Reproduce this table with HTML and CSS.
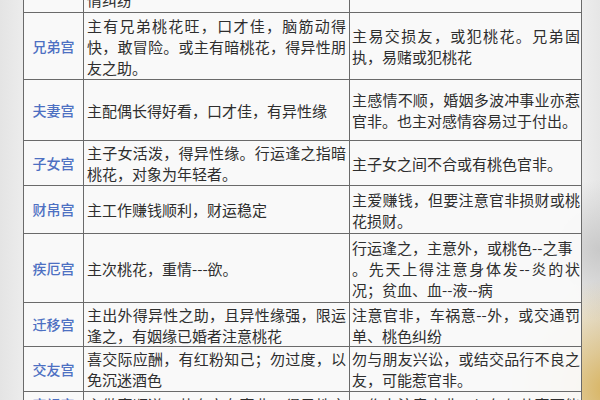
FILE: index.html
```html
<!DOCTYPE html>
<html lang="zh">
<head>
<meta charset="utf-8">
<link rel="stylesheet" href="styles.css">
</head>
<body>
<div class="page">
<table class="grid">
<colgroup><col class="c1"><col class="c2"><col class="c3"></colgroup>
<tr class="r0"><td class="name"></td><td class="txt bottom">情纠纷</td><td class="txt rt"></td></tr>
<tr class="r1"><td class="name">兄弟宫</td><td class="txt">主有兄弟桃花旺，口才佳，脑筋动得快，敢冒险。或主有暗桃花，得异性朋友之助。</td><td class="txt rt">主易交损友，或犯桃花。兄弟固执，易赌或犯桃花</td></tr>
<tr class="r2"><td class="name">夫妻宫</td><td class="txt">主配偶长得好看，口才佳，有异性缘</td><td class="txt rt">主感情不顺，婚姻多波冲事业亦惹官非。也主对感情容易过于付出。</td></tr>
<tr class="r3"><td class="name">子女宫</td><td class="txt">主子女活泼，得异性缘。行运逢之指暗桃花，对象为年轻者。</td><td class="txt rt">主子女之间不合或有桃色官非。</td></tr>
<tr class="r4"><td class="name">财帛宫</td><td class="txt">主工作赚钱顺利，财运稳定</td><td class="txt rt">主爱赚钱，但要注意官非损财或桃花损财。</td></tr>
<tr class="r5"><td class="name">疾厄宫</td><td class="txt">主次桃花，重情---欲。</td><td class="txt rt">行运逢之，主意外，或桃色--之事<br>。先天上得注意身体发--炎的状况；贫血、血--液--病</td></tr>
<tr class="r6"><td class="name">迁移宫</td><td class="txt">主出外得异性之助，且异性缘强，限运逢之，有姻缘已婚者注意桃花</td><td class="txt rt">注意官非，车祸意--外，或交通罚单、桃色纠纷</td></tr>
<tr class="r7"><td class="name">交友宫</td><td class="txt">喜交际应酬，有红粉知己；勿过度，以免沉迷酒色</td><td class="txt rt">勿与朋友兴讼，或结交品行不良之友，可能惹官非。</td></tr>
<tr class="r8"><td class="name top">官禄宫</td><td class="txt top">主做事顺遂，若身旁有事业，得异性之助</td><td class="txt rt top">工作上注意官非，切勿与共事可能被</td></tr>
</table>
</div>
</body>
</html>
```

FILE: styles.css
```css
html, body {
  margin: 0;
  padding: 0;
}
body {
  width: 600px;
  height: 400px;
  overflow: hidden;
  background:
    radial-gradient(circle at 610px 390px, #d8b35e 0, rgba(216,179,94,0.6) 40px, rgba(216,179,94,0) 110px),
    radial-gradient(circle at 600px 250px, #c9c9c9 0, rgba(200,200,200,0) 70px),
    linear-gradient(to right, #e4e4e4 0, #ececec 23px, #eeeeee 580px, #e6e6e6 600px);
  font-family: "Noto Sans CJK SC", "Noto Sans", sans-serif;
}
.page {
  padding-left: 23px;
}
.grid {
  margin-top: -21px;
  border-collapse: collapse;
  table-layout: fixed;
  width: 558px;
  background: rgba(250, 250, 250, 0.94);
}
.c1 { width: 60px; }
.c2 { width: 266px; }
.c3 { width: 232px; }
.grid td {
  border: 1px solid #6a6a6a;
  vertical-align: middle;
  padding: 0 3px;
  font-size: 15px;
  line-height: 21px;
  color: #2e2e2e;
}
.grid td.name {
  text-align: center;
  color: #4d70c2;
  font-size: 14px;
  font-weight: 500;
  padding: 0;
}
.grid td.txt {
  text-align: justify;
}
.grid td.rt {
  padding: 0 1px 0 2px;
}
.grid td.bottom { vertical-align: bottom; padding-bottom: 2px; }
.grid td.top { vertical-align: top; padding-top: 2px; }
.r0 td { height: 30px; }
.r1 td { height: 66px; }
.r2 td { height: 60px; }
.r3 td { height: 44px; }
.r4 td { height: 47px; }
.r5 td { height: 68px; }
.r6 td { height: 43px; }
.r7 td { height: 44px; }
.r8 td { height: 40px; }
```
